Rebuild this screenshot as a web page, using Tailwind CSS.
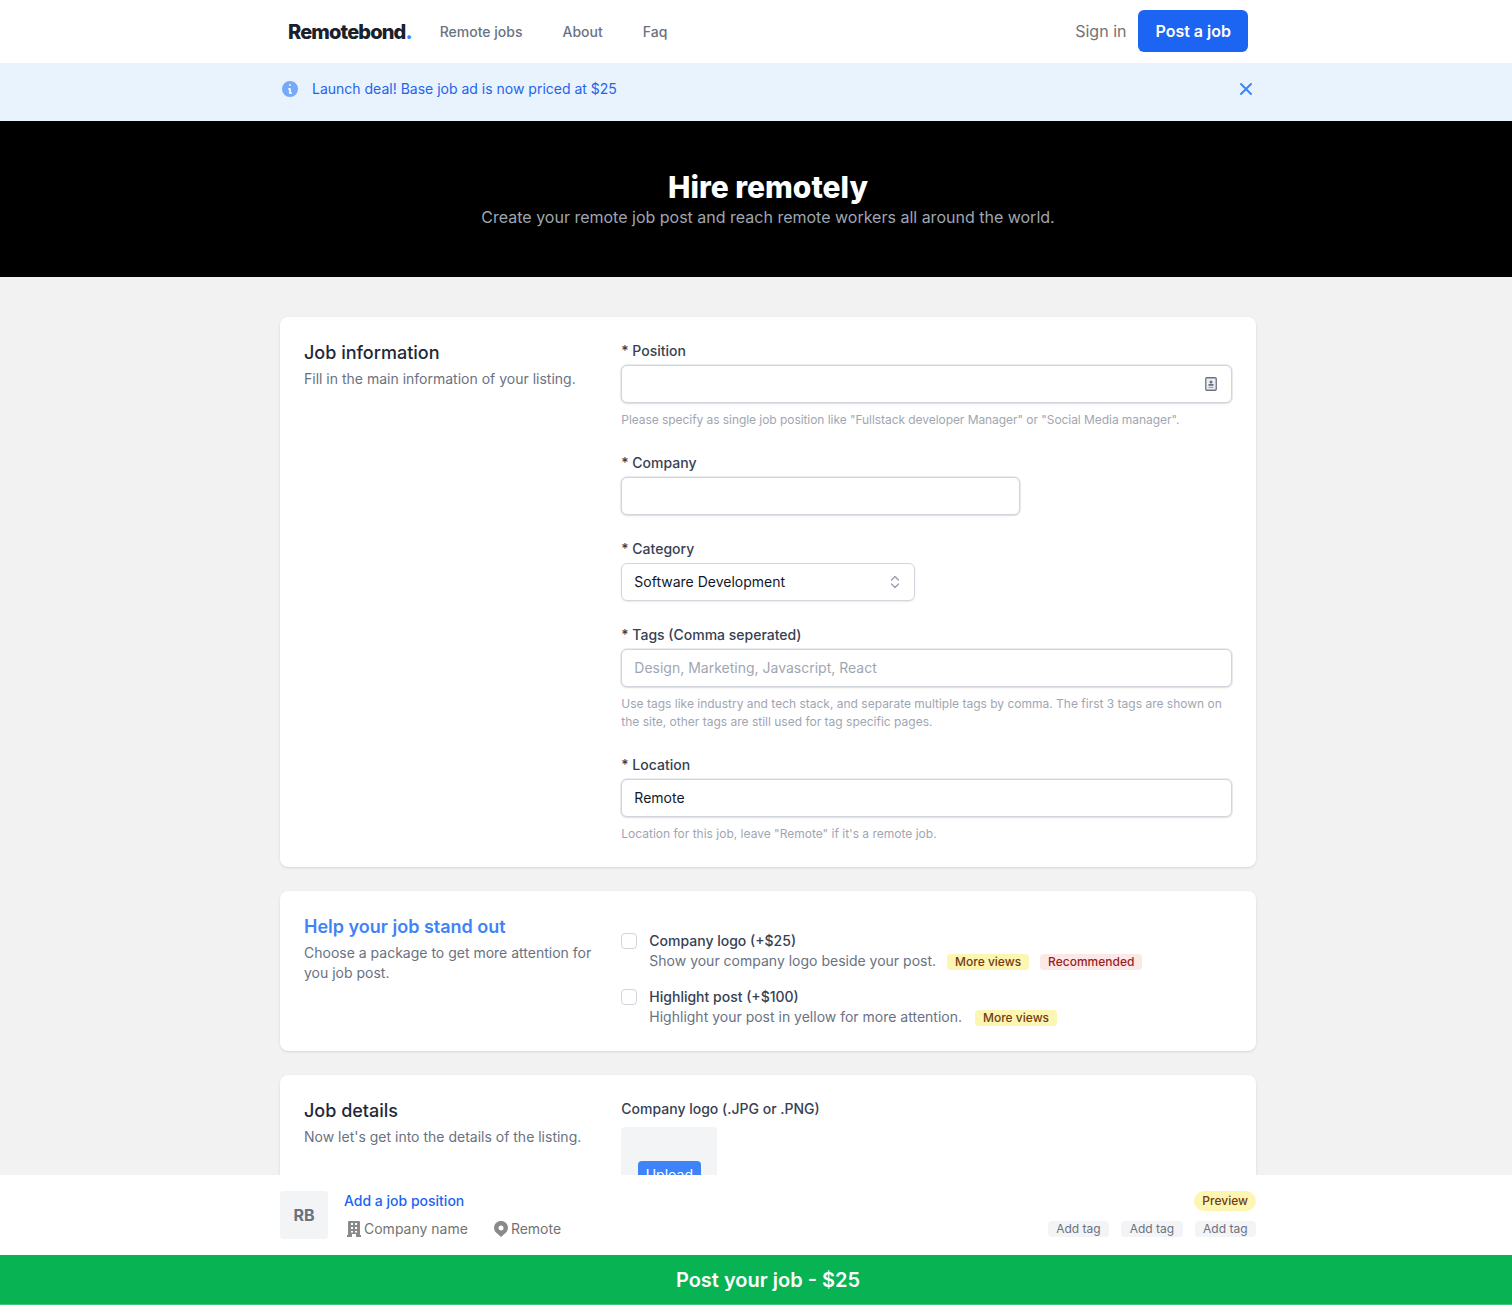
<!doctype html>
<html lang="en">
  <head>
    <meta charset="UTF-8" />
    <title>Post a job - Remotebond</title>
    <script src="https://cdn.jsdelivr.net/npm/@tailwindcss/browser@4"></script>
  </head>
  <body class="h-[1305px] overflow-hidden bg-[#f2f2f2] font-['Inter',sans-serif] text-sm text-gray-900">
    <div class="flex h-[1305px] w-[1536px] flex-col">
      <main class="h-[1175px] shrink-0 overflow-hidden">
        <header class="h-[63px] bg-white">
          <div class="mx-auto flex h-[62px] w-[976px] items-center justify-between px-2">
            <div class="mt-[2px] flex items-center">
              <span class="text-xl font-extrabold tracking-[-0.85px] text-[#1a202c]">Remotebond<span class="text-[#3f83f8]">.</span></span>
              <nav class="ml-7 flex gap-10 text-sm font-medium text-gray-500">
                <a>Remote jobs</a>
                <a>About</a>
                <a>Faq</a>
              </nav>
            </div>
            <div class="flex items-center">
              <a class="text-base text-neutral-500">Sign in</a>
              <a class="ml-3 flex h-[42px] items-center rounded-md bg-[#1c64f2] px-[17px] text-base font-semibold text-white">Post a job</a>
            </div>
          </div>
        </header>

        <div class="h-[58px] bg-[#e8f3fe]">
          <div class="mx-auto flex h-[52px] w-[976px] items-center justify-between">
            <div class="flex items-center text-sm text-[#2563eb]">
              <svg class="h-5 w-5 text-[#76a9fa]" viewBox="0 0 20 20" fill="currentColor"><path fill-rule="evenodd" clip-rule="evenodd" d="M18 10a8 8 0 1 1-16 0 8 8 0 0 1 16 0zm-7-4a1 1 0 1 1-2 0 1 1 0 0 1 2 0zM9 9a1 1 0 0 0 0 2v3a1 1 0 0 0 1 1h1a1 1 0 1 0 0-2v-3a1 1 0 0 0-1-1H9z" /></svg>
              <span class="ml-3">Launch deal! Base job ad is now priced at $25</span>
            </div>
            <svg class="h-5 w-5 text-[#3f83f8]" viewBox="0 0 20 20" fill="none" stroke="currentColor" stroke-width="2" stroke-linecap="round"><path d="M5 5l10 10M15 5L5 15" /></svg>
          </div>
        </div>

        <section class="flex h-[156px] flex-col items-center bg-black pt-[48px] text-center">
          <h1 class="text-3xl leading-9 font-extrabold text-white">Hire remotely</h1>
          <p class="text-base leading-6 text-[#9fa6b2]">Create your remote job post and reach remote workers all around the world.</p>
        </section>

        <div class="mx-auto flex w-[976px] flex-col gap-6 pt-10">
          <div class="h-[550px] rounded-lg bg-white p-6 shadow">
            <div class="grid grid-cols-3 gap-6">
              <div>
                <h2 class="text-lg leading-6 font-medium text-gray-800">Job information</h2>
                <p class="mt-1 text-sm leading-5 text-gray-500">Fill in the main information of your listing.</p>
              </div>
              <div class="col-span-2">
                <label class="block text-sm leading-5 font-medium text-gray-700">* Position</label>
                <div class="mt-1 flex h-[38px] items-center justify-end rounded-md border border-[#d2d6dc] bg-white pr-[14px] shadow-[0_0_0_1px_rgba(210,214,220,0.45),0_1px_2px_rgba(0,0,0,0.1)]">
                  <svg class="h-[14px] w-[12px] text-gray-500" viewBox="0 0 12 14"><rect x="0.75" y="0.75" width="10.500" height="12.500" fill="#eceef1" stroke="currentColor" stroke-width="1.300" rx="1" /><circle cx="6" cy="5" r="1.500" fill="currentColor" /><rect x="3.500" y="7" width="5" height="1.800" fill="currentColor" /><rect x="3.500" y="9.800" width="5" height="1.200" fill="currentColor" opacity="0.6" /></svg>
                </div>
                <p class="mt-[7px] text-xs leading-5 tracking-[-0.06px] text-[#9fa6b2]">Please specify as single job position like "Fullstack developer Manager" or "Social Media manager".</p>

                <label class="mt-[23px] block text-sm leading-5 font-medium text-gray-700">* Company</label>
                <div class="mt-1 h-[38px] w-[399px] rounded-md border border-[#d2d6dc] bg-white shadow-[0_0_0_1px_rgba(210,214,220,0.45),0_1px_2px_rgba(0,0,0,0.1)]"></div>

                <label class="mt-6 block text-sm leading-5 font-medium text-gray-700">* Category</label>
                <div class="mt-1 flex h-[38px] w-[294px] items-center justify-between rounded-md border border-[#d2d6dc] bg-white pr-[13px] pl-[12px] text-sm text-gray-900 shadow-[0_1px_2px_rgba(0,0,0,0.08)]">
                  <span>Software Development</span>
                  <svg class="h-5 w-[12px] text-gray-400" viewBox="0 0 12 20" fill="none" stroke="currentColor" stroke-width="1.400" stroke-linecap="round" stroke-linejoin="round"><path d="M2.500 8L6 4.500 9.500 8M2.500 12L6 15.500 9.500 12" /></svg>
                </div>

                <label class="mt-6 block text-sm leading-5 font-medium text-gray-700">* Tags (Comma seperated)</label>
                <div class="mt-1 flex h-[38px] items-center rounded-md border border-[#d2d6dc] bg-white pl-[12px] text-sm text-[#9fa6b2] shadow-[0_0_0_1px_rgba(210,214,220,0.45),0_1px_2px_rgba(0,0,0,0.1)]">Design, Marketing, Javascript, React</div>
                <p class="mt-2 text-xs leading-[18px] text-[#9fa6b2]">Use tags like industry and tech stack, and separate multiple tags by comma. The first 3 tags are shown on the site, other tags are still used for tag specific pages.</p>

                <label class="mt-6 block text-sm leading-5 font-medium text-gray-700">* Location</label>
                <div class="mt-1 flex h-[38px] items-center rounded-md border border-[#d2d6dc] bg-white pl-[12px] text-sm text-gray-900 shadow-[0_0_0_1px_rgba(210,214,220,0.45),0_1px_2px_rgba(0,0,0,0.1)]">Remote</div>
                <p class="mt-[7px] text-xs leading-5 text-[#9fa6b2]">Location for this job, leave "Remote" if it's a remote job.</p>
              </div>
            </div>
          </div>

          <div class="h-[160px] rounded-lg bg-white p-6 shadow">
            <div class="grid grid-cols-3 gap-6">
              <div>
                <h2 class="text-lg leading-6 font-semibold text-[#3f83f8]">Help your job stand out</h2>
                <p class="mt-1 text-sm leading-5 text-gray-500">Choose a package to get more attention for you job post.</p>
              </div>
              <div class="col-span-2 pt-[16px]">
                <div class="flex">
                  <span class="mt-[2px] h-4 w-4 shrink-0 rounded border border-gray-300 bg-white"></span>
                  <div class="ml-3">
                    <div class="text-sm leading-5 font-medium text-gray-700">Company logo (+$25)</div>
                    <div class="flex items-center text-sm leading-5 text-gray-500">
                      <span>Show your company logo beside your post.</span>
                      <span class="mt-px ml-[11px] rounded bg-[#fdf6b2] px-2 text-xs leading-4 font-medium text-[#723b13]">More views</span>
                      <span class="mt-px ml-[11px] rounded bg-[#fde8e8] px-2 text-xs leading-4 font-medium text-[#9b1c1c]">Recommended</span>
                    </div>
                  </div>
                </div>
                <div class="mt-4 flex">
                  <span class="mt-[2px] h-4 w-4 shrink-0 rounded border border-gray-300 bg-white"></span>
                  <div class="ml-3">
                    <div class="text-sm leading-5 font-medium text-gray-700">Highlight post (+$100)</div>
                    <div class="flex items-center text-sm leading-5 text-gray-500">
                      <span>Highlight your post in yellow for more attention.</span>
                      <span class="mt-px ml-[13px] rounded bg-[#fdf6b2] px-2 text-xs leading-4 font-medium text-[#723b13]">More views</span>
                    </div>
                  </div>
                </div>
              </div>
            </div>
          </div>

          <div class="h-[300px] rounded-lg bg-white p-6 shadow">
            <div class="grid grid-cols-3 gap-6">
              <div>
                <h2 class="text-lg leading-6 font-medium text-gray-800">Job details</h2>
                <p class="mt-1 text-sm leading-5 text-gray-500">Now let's get into the details of the listing.</p>
              </div>
              <div class="col-span-2">
                <label class="block text-sm leading-5 font-medium text-gray-700">Company logo (.JPG or .PNG)</label>
                <div class="mt-2 flex h-[96px] w-[96px] items-center justify-center rounded-sm bg-gray-100">
                  <span class="rounded-sm bg-[#3f83f8] px-2 py-1 text-sm text-white">Upload</span>
                </div>
              </div>
            </div>
          </div>
        </div>
      </main>

      <div class="flex h-[80px] shrink-0 bg-white">
        <div class="mx-auto flex h-full w-[976px] items-start justify-between pt-4">
          <div class="flex">
            <div class="flex h-12 w-12 items-center justify-center rounded-sm bg-gray-100 text-base font-bold text-gray-500">RB</div>
            <div class="ml-4">
              <div class="text-sm leading-5 font-medium text-[#1c64f2]">Add a job position</div>
              <div class="mt-2 flex text-sm leading-5 text-neutral-500">
                <span class="flex items-center">
                  <svg class="ml-[3px] h-4 w-[14px] text-[#8a8a8a]" viewBox="0 0 14 16" fill="currentColor"><path fill-rule="evenodd" clip-rule="evenodd" d="M1 1a1 1 0 0 1 1-1h10a1 1 0 0 1 1 1v13h1v2H9v-3H5v3H0v-2h1V1zm3 1v2h2V2H4zm4 0v2h2V2H8zM4 6v2h2V6H4zm4 0v2h2V6H8zm-4 4v1.500h2V10H4zm4 0v1.500h2V10H8z" /></svg>
                  <span class="ml-[3px]">Company name</span>
                </span>
                <span class="ml-[26px] flex items-center">
                  <svg class="h-4 w-[14px] text-[#8a8a8a]" viewBox="0 0 14 16" fill="currentColor"><path fill-rule="evenodd" clip-rule="evenodd" d="M2 2a7 7 0 0 1 10 0c2.600 2.700 2.600 6.800 0 9.500L7 16l-5-4.500C-.6 8.800-.6 4.700 2 2zm5 7.500a2.500 2.500 0 1 0 0-5 2.500 2.500 0 0 0 0 5z" /></svg>
                  <span class="ml-[3px]">Remote</span>
                </span>
              </div>
            </div>
          </div>
          <div class="flex flex-col items-end">
            <span class="rounded-full bg-[#fdf6b2] px-2 text-xs leading-5 font-medium text-[#723b13]">Preview</span>
            <div class="mt-[10px] flex gap-3 text-xs leading-4 text-gray-500">
              <span class="rounded bg-gray-100 px-[8.5px]">Add tag</span>
              <span class="rounded bg-gray-100 px-[8.5px]">Add tag</span>
              <span class="rounded bg-gray-100 px-[8.5px]">Add tag</span>
            </div>
          </div>
        </div>
      </div>

      <div class="flex h-[50px] shrink-0 items-center justify-center bg-[#07b353] text-xl font-semibold text-white shadow-[inset_0_-1px_0_#3cc97a]">Post your job - $25</div>
    </div>
  </body>
</html>
